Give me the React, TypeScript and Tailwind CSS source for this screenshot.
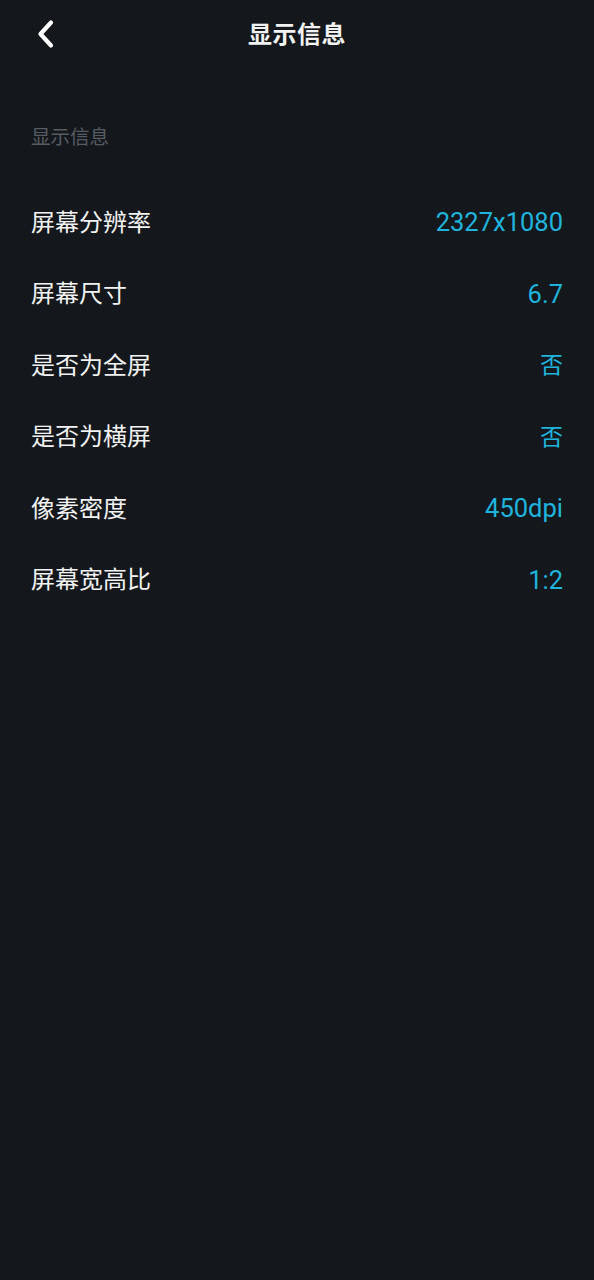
import { useState } from "react";

const rows = [
    { label: "屏幕分辨率", value: "2327x1080", cjk: false },
    { label: "屏幕尺寸", value: "6.7", cjk: false },
    { label: "是否为全屏", value: "否", cjk: true },
    { label: "是否为横屏", value: "否", cjk: true },
    { label: "像素密度", value: "450dpi", cjk: false },
    { label: "屏幕宽高比", value: "1:2", cjk: false },
];

const font = { fontFamily: "Roboto, 'Noto Sans CJK SC', sans-serif" };

export default function App() {
    const [items] = useState(rows);

    return (
        <div className="min-h-[1280px] w-full bg-[#14181c] text-[#f2f2f2]" style={font}>
            <header className="relative flex h-[70px] items-center justify-center">
                <button className="absolute left-[30px] top-[14px] flex h-[40px] w-[32px] items-center justify-center">
                    <svg width="22" height="30" viewBox="0 0 22 30" fill="none">
                        <path d="M16 3.5 L5.5 15 L16 26.5" stroke="#ffffff" strokeWidth="4.2" strokeLinecap="round" strokeLinejoin="round" />
                    </svg>
                </button>
                <h1 className="text-[24px] font-bold leading-none tracking-[0.5px]">显示信息</h1>
            </header>

            <div className="px-[31px] pt-[54px] pb-[35px]">
                <p className="text-[19.5px] leading-[28px] text-[#575c63]">显示信息</p>
            </div>

            <ul className="px-[31px]">
                {items.map((row) => (
                    <li key={row.label} className="flex h-[71.5px] items-center justify-between">
                        <span className="text-[24px] leading-none">{row.label}</span>
                        <span className={row.cjk ? "text-[23px] leading-none text-[#1fb4de]" : "text-[25.5px] leading-none text-[#1fb4de]"}>
                            {row.value}
                        </span>
                    </li>
                ))}
            </ul>
        </div>
    );
}
